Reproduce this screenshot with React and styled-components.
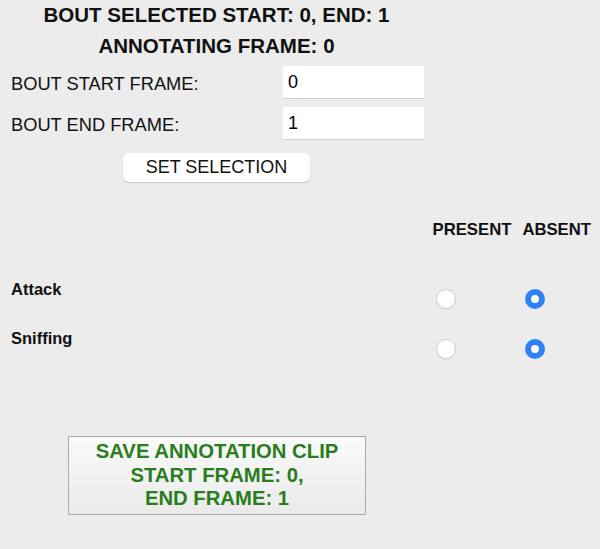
import React, { useState } from "react";
import styled, { createGlobalStyle } from "styled-components";

const GlobalStyle = createGlobalStyle`
  html, body {
    margin: 0;
    padding: 0;
    background: #ececec;
  }
  body {
    font-family: "Liberation Sans", Arial, sans-serif;
    color: #111;
  }
`;

const Page = styled.div`
  width: 600px;
  height: 549px;
  background: #ececec;
  overflow: hidden;
`;

const TopPanel = styled.div`
  width: 433px;
  display: flex;
  flex-direction: column;
  align-items: center;
`;

const Title = styled.div`
  font-weight: bold;
  font-size: 20.5px;
  line-height: 22px;
  margin-top: ${(p) => p.$top}px;
`;

const FieldRow = styled.div`
  align-self: stretch;
  display: flex;
  align-items: center;
  justify-content: space-between;
  padding-left: 11px;
  padding-right: 9px;
  margin-top: ${(p) => p.$top}px;
`;

const FieldLabel = styled.label`
  font-size: 18.3px;
  padding-top: 3px;
`;

const FieldInput = styled.input`
  box-sizing: border-box;
  width: 141px;
  height: 33px;
  border: none;
  border-bottom: 1px solid #d0d0d0;
  background: #fff;
  font-family: "Liberation Sans", Arial, sans-serif;
  font-size: 18px;
  padding: 0 5px;
  outline: none;
`;

const SetButton = styled.button`
  margin-top: 13px;
  width: 187px;
  height: 29px;
  background: #fff;
  border: none;
  border-radius: 6px;
  box-shadow: 0 1px 1px rgba(0, 0, 0, 0.18);
  font-family: "Liberation Sans", Arial, sans-serif;
  font-size: 18px;
  color: #111;
  padding: 0;
`;

const HeaderRow = styled.div`
  display: flex;
  justify-content: flex-end;
  gap: 11px;
  padding-right: 9px;
  margin-top: 38px;
`;

const ColHead = styled.div`
  font-weight: bold;
  font-size: 16.7px;
  line-height: 20px;
`;

const BehaviorRow = styled.div`
  display: flex;
  align-items: flex-start;
  padding-left: 11px;
  margin-top: ${(p) => p.$top}px;
  height: 31px;
`;

const BehaviorName = styled.div`
  flex: 1;
  font-weight: bold;
  font-size: 16.5px;
  line-height: 20px;
`;

const RadioSlot = styled.div`
  width: ${(p) => p.$w}px;
  display: flex;
  justify-content: center;
  padding-top: ${(p) => p.$drop}px;
`;

const Radio = styled.button`
  width: 20px;
  height: 20px;
  border-radius: 50%;
  padding: 0;
  box-sizing: border-box;
  border: ${(p) => (p.$on ? "6px solid #2f82f5" : "1px solid #cfcfcf")};
  background: #fff;
  box-shadow: ${(p) => (p.$on ? "none" : "0 1px 1px rgba(0,0,0,0.06)")};
`;

const SaveButton = styled.button`
  margin: 77px 0 0 68px;
  width: 298px;
  height: 79px;
  box-sizing: border-box;
  border: 1px solid #a9a9a9;
  background: linear-gradient(#fafafa, #eaeaea);
  color: #2a7d1d;
  font-family: "Liberation Sans", Arial, sans-serif;
  font-weight: bold;
  font-size: 20.3px;
  line-height: 23.5px;
  padding: 0;
`;

const behaviors = ["Attack", "Sniffing"];

export default function App() {
  const [start, setStart] = useState("0");
  const [end, setEnd] = useState("1");
  const [marks, setMarks] = useState({ Attack: false, Sniffing: false });

  return (
    <Page>
      <GlobalStyle />
      <TopPanel>
        <Title $top={4}>BOUT SELECTED START: 0, END: 1</Title>
        <Title $top={9}>ANNOTATING FRAME: 0</Title>
        <FieldRow $top={9}>
          <FieldLabel>BOUT START FRAME:</FieldLabel>
          <FieldInput value={start} onChange={(e) => setStart(e.target.value)} />
        </FieldRow>
        <FieldRow $top={8}>
          <FieldLabel>BOUT END FRAME:</FieldLabel>
          <FieldInput value={end} onChange={(e) => setEnd(e.target.value)} />
        </FieldRow>
        <SetButton>SET SELECTION</SetButton>
      </TopPanel>

      <HeaderRow>
        <ColHead>PRESENT</ColHead>
        <ColHead>ABSENT</ColHead>
      </HeaderRow>

      {behaviors.map((b, i) => (
        <BehaviorRow key={b} $top={i === 0 ? 39 : 18}>
          <BehaviorName>{b}</BehaviorName>
          <RadioSlot $w={22} $drop={i === 0 ? 10 : 11}>
            <Radio
              $on={marks[b]}
              onClick={() => setMarks({ ...marks, [b]: true })}
            />
          </RadioSlot>
          <RadioSlot $w={67} />
          <RadioSlot $w={22} $drop={i === 0 ? 10 : 11}>
            <Radio
              $on={!marks[b]}
              onClick={() => setMarks({ ...marks, [b]: false })}
            />
          </RadioSlot>
          <RadioSlot $w={54} />
        </BehaviorRow>
      ))}

      <SaveButton>
        SAVE ANNOTATION CLIP
        <br />
        START FRAME: 0,
        <br />
        END FRAME: 1
      </SaveButton>
    </Page>
  );
}
